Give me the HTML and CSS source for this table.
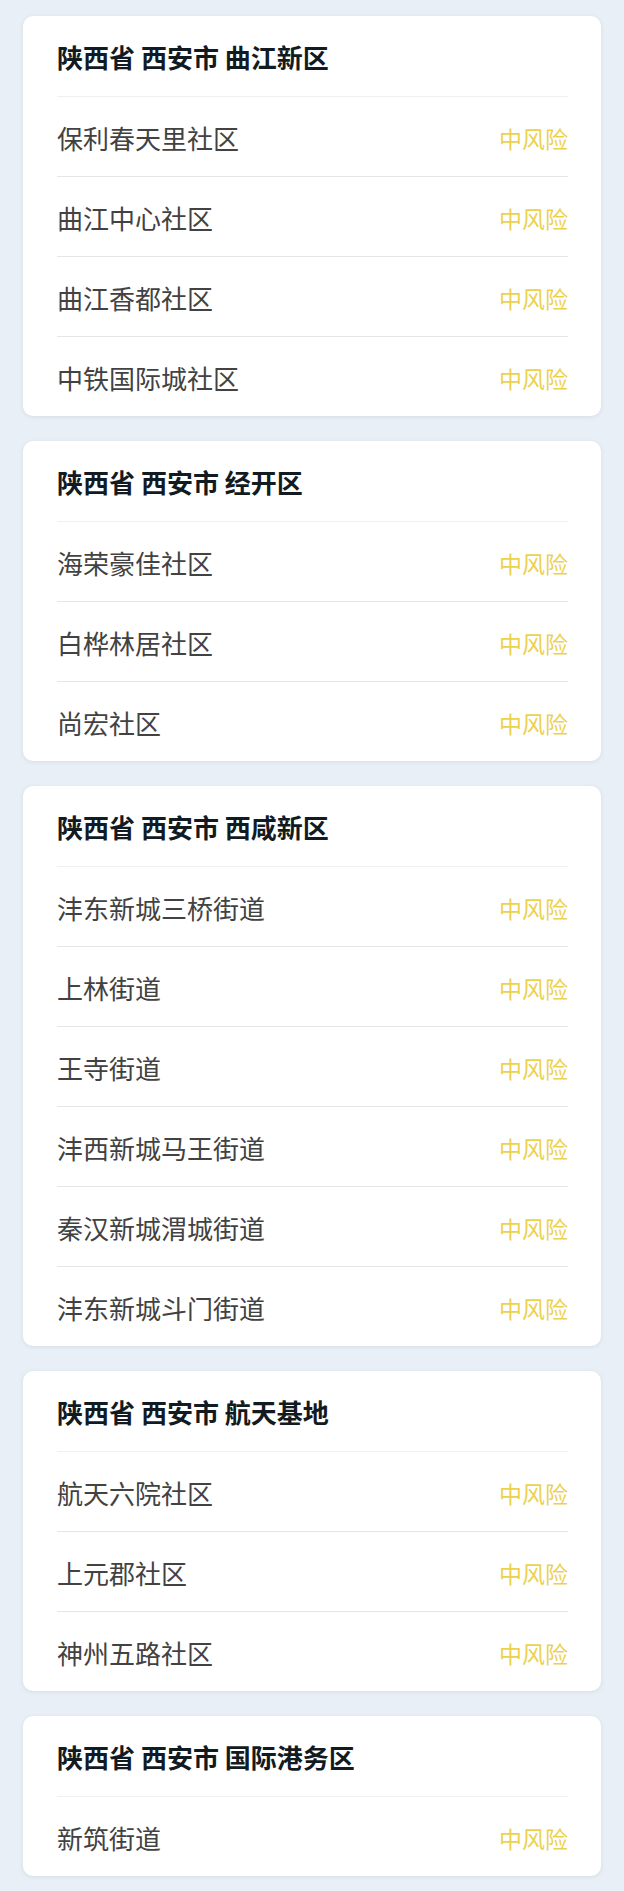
FILE: index.html
```html
<!DOCTYPE html>
<html lang="zh-CN">
<head>
<meta charset="utf-8">
<link rel="stylesheet" href="styles.css">
</head>
<body>
<main class="page">
  <section class="card">
    <h2 class="card-title">陕西省 西安市 曲江新区</h2>
    <div class="row"><span class="name">保利春天里社区</span><span class="risk">中风险</span></div>
    <div class="row"><span class="name">曲江中心社区</span><span class="risk">中风险</span></div>
    <div class="row"><span class="name">曲江香都社区</span><span class="risk">中风险</span></div>
    <div class="row"><span class="name">中铁国际城社区</span><span class="risk">中风险</span></div>
  </section>
  <section class="card">
    <h2 class="card-title">陕西省 西安市 经开区</h2>
    <div class="row"><span class="name">海荣豪佳社区</span><span class="risk">中风险</span></div>
    <div class="row"><span class="name">白桦林居社区</span><span class="risk">中风险</span></div>
    <div class="row"><span class="name">尚宏社区</span><span class="risk">中风险</span></div>
  </section>
  <section class="card">
    <h2 class="card-title">陕西省 西安市 西咸新区</h2>
    <div class="row"><span class="name">沣东新城三桥街道</span><span class="risk">中风险</span></div>
    <div class="row"><span class="name">上林街道</span><span class="risk">中风险</span></div>
    <div class="row"><span class="name">王寺街道</span><span class="risk">中风险</span></div>
    <div class="row"><span class="name">沣西新城马王街道</span><span class="risk">中风险</span></div>
    <div class="row"><span class="name">秦汉新城渭城街道</span><span class="risk">中风险</span></div>
    <div class="row"><span class="name">沣东新城斗门街道</span><span class="risk">中风险</span></div>
  </section>
  <section class="card">
    <h2 class="card-title">陕西省 西安市 航天基地</h2>
    <div class="row"><span class="name">航天六院社区</span><span class="risk">中风险</span></div>
    <div class="row"><span class="name">上元郡社区</span><span class="risk">中风险</span></div>
    <div class="row"><span class="name">神州五路社区</span><span class="risk">中风险</span></div>
  </section>
  <section class="card">
    <h2 class="card-title">陕西省 西安市 国际港务区</h2>
    <div class="row"><span class="name">新筑街道</span><span class="risk">中风险</span></div>
  </section>
</main>
</body>
</html>
```
FILE: styles.css
```css
html, body {
  margin: 0;
  padding: 0;
  background: #e9eff6;
}
body {
  font-family: "Noto Sans CJK SC", "Noto Sans", sans-serif;
}
.page {
  display: flex;
  flex-direction: column;
  gap: 25px;
  padding: 16px 23px 15px 23px;
}
.card {
  background: #ffffff;
  border-radius: 10px;
  padding: 0 33px 0 34px;
  box-shadow: 0 1px 4px rgba(120, 140, 165, 0.18);
}
.card-title {
  margin: 0;
  height: 80px;
  display: flex;
  align-items: center;
  padding-top: 1px;
  box-sizing: border-box;
  font-size: 26px;
  font-weight: 700;
  color: #121a22;
}
.row {
  height: 80px;
  box-sizing: border-box;
  border-top: 1px solid #e6e6e6;
  display: flex;
  align-items: center;
  justify-content: space-between;
  padding-top: 2px;
}
.card-title + .row {
  border-top-color: #f0f0f0;
}
.name {
  font-size: 26px;
  color: #424242;
}
.risk {
  font-size: 23px;
  color: #ecd14f;
}
```
